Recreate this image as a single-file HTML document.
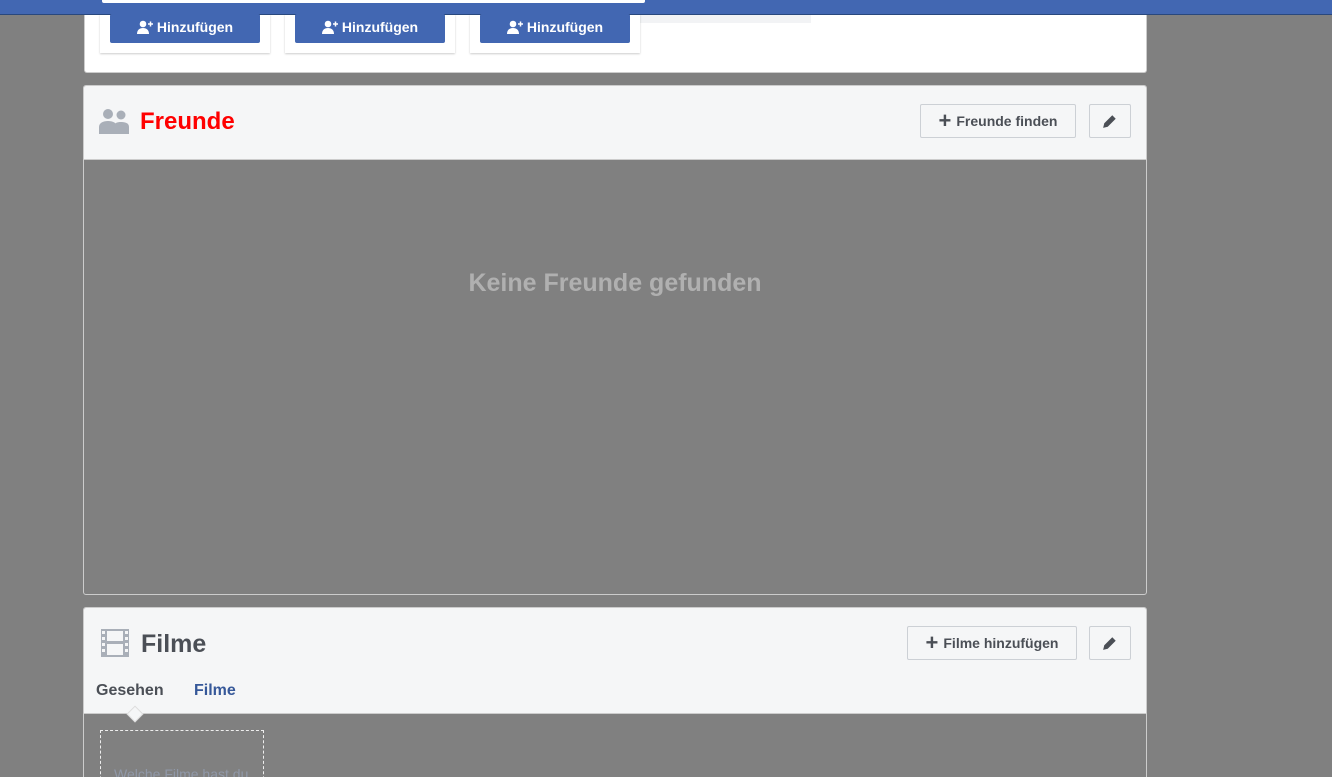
<!DOCTYPE html>
<html style="width:1332px;height:777px;overflow:hidden"><head><meta charset="utf-8"><style>
*{box-sizing:border-box;margin:0;padding:0}
body{width:1332px;height:777px;background:#808080;font-family:"Liberation Sans",Arial,sans-serif;position:relative;overflow:hidden}
.abs{position:absolute}
.bar{left:0;top:0;width:1332px;height:15px;background:#4267b2;border-bottom:1px solid #29487d}
.search{left:102px;top:0;width:543px;height:3px;background:#fff;border-radius:0 0 2px 2px}
.card{background:#fff;border:1px solid #ccc;border-radius:3px}
.mini{background:#fff;box-shadow:0 1px 2px rgba(0,0,0,.2);top:14px;height:39px;width:170px}
.btn{background:#4267b2;color:#fff;font-weight:bold;font-size:14px;height:29px;width:150px;top:14px;display:flex;align-items:center;justify-content:center;gap:4px;border-radius:2px;padding-bottom:3px}
.hdr{background:#f5f6f7;border-bottom:1px solid #ccc}
.gbtn{background:#f5f6f7;border:1px solid #ccd0d5;border-radius:2px;color:#4b4f56;font-weight:bold;font-size:14px;display:flex;align-items:center;justify-content:center;gap:5px;height:34px}
</style></head><body>
<div class="abs card" style="left:84px;top:12px;width:1063px;height:61px;border-top:none;border-radius:0 0 3px 3px"></div>
<div class="abs" style="left:640px;top:15px;width:171px;height:8px;background:#f2f3f5"></div>
<div class="abs mini" style="left:100px"></div>
<div class="abs mini" style="left:285px"></div>
<div class="abs mini" style="left:470px"></div>
<div class="abs bar"></div>
<div class="abs search"></div>
<div class="abs btn" style="left:110px"><svg width="16" height="14" viewBox="0 0 16 14"><circle cx="6" cy="4" r="3.3" fill="#fff"/><path d="M0 14c0-4 2.5-6 6-6s6 2 6 6z" fill="#fff"/><path d="M11 4h5M13.5 1.5v5" stroke="#fff" stroke-width="1.5"/></svg>Hinzufügen</div>
<div class="abs btn" style="left:295px"><svg width="16" height="14" viewBox="0 0 16 14"><circle cx="6" cy="4" r="3.3" fill="#fff"/><path d="M0 14c0-4 2.5-6 6-6s6 2 6 6z" fill="#fff"/><path d="M11 4h5M13.5 1.5v5" stroke="#fff" stroke-width="1.5"/></svg>Hinzufügen</div>
<div class="abs btn" style="left:480px"><svg width="16" height="14" viewBox="0 0 16 14"><circle cx="6" cy="4" r="3.3" fill="#fff"/><path d="M0 14c0-4 2.5-6 6-6s6 2 6 6z" fill="#fff"/><path d="M11 4h5M13.5 1.5v5" stroke="#fff" stroke-width="1.5"/></svg>Hinzufügen</div>

<div class="abs" style="left:83px;top:85px;width:1064px;height:510px;border:1px solid #ccc;border-radius:3px;overflow:hidden">
 <div class="hdr" style="height:74px;position:relative">
  <svg class="abs" style="left:15px;top:22px" width="32" height="26" viewBox="0 0 32 26"><circle cx="9" cy="6" r="5" fill="#a9afb8"/><path d="M0 26v-7c0-4 4-6 9-6s9 2 9 6v7z" fill="#a9afb8"/><circle cx="22" cy="7" r="4.5" fill="#a9afb8"/><path d="M15 26v-7c0-4 3-5 7-5s8 1 8 5v7z" fill="#a9afb8"/></svg>
  <div class="abs" style="left:56px;top:22px;font-size:24px;font-weight:bold;color:#f00">Freunde</div>
  <div class="abs gbtn" style="left:836px;top:18px;width:156px"><span style="font-size:22px;line-height:1">+</span>Freunde finden</div>
  <div class="abs gbtn" style="left:1005px;top:18px;width:42px"><svg width="16" height="16" viewBox="0 0 14 14"><path d="M1 13l1-4 7-7 3 3-7 7z" fill="#4b4f56"/></svg></div>
 </div>
 <div style="text-align:center;color:#b0b0b0;font-size:25px;font-weight:bold;margin-top:109px">Keine Freunde gefunden</div>
</div>

<div class="abs" style="left:83px;top:607px;width:1064px;height:190px;border:1px solid #ccc;border-radius:3px;overflow:hidden">
 <div class="hdr" style="height:106px;position:relative">
  <svg class="abs" style="left:16px;top:20px" width="30" height="30" viewBox="0 0 30 30"><rect x="1" y="1" width="28" height="28" fill="#a9afb8"/><rect x="7" y="3" width="16" height="10" fill="#f5f6f7"/><rect x="7" y="16" width="16" height="11" fill="#f5f6f7"/><g fill="#f5f6f7"><rect x="2" y="3" width="3" height="3"/><rect x="2" y="9" width="3" height="3"/><rect x="2" y="15" width="3" height="3"/><rect x="2" y="21" width="3" height="3"/><rect x="25" y="3" width="3" height="3"/><rect x="25" y="9" width="3" height="3"/><rect x="25" y="15" width="3" height="3"/><rect x="25" y="21" width="3" height="3"/></g></svg>
  <div class="abs" style="left:57px;top:22px;font-size:25px;font-weight:bold;color:#4b4f56">Filme</div>
  <div class="abs gbtn" style="left:823px;top:18px;width:170px"><span style="font-size:22px;line-height:1">+</span>Filme hinzufügen</div>
  <div class="abs gbtn" style="left:1005px;top:18px;width:42px"><svg width="16" height="16" viewBox="0 0 14 14"><path d="M1 13l1-4 7-7 3 3-7 7z" fill="#4b4f56"/></svg></div>
  <div class="abs" style="left:12px;top:74px;font-size:16px;font-weight:bold;color:#4b4f56">Gesehen</div>
  <div class="abs" style="left:110px;top:74px;font-size:16px;font-weight:bold;color:#365899">Filme</div>
  <div class="abs" style="left:45px;top:100px;width:12px;height:12px;background:#f5f6f7;border:1px solid #ddd;transform:rotate(45deg)"></div>
 </div>
 <div class="abs" style="left:16px;top:122px;width:164px;height:70px;border:1px dashed #eee"></div>
 <div class="abs" style="left:30px;top:158px;font-size:14px;color:#9098a8">Welche Filme hast du</div>
</div>
</body></html>
